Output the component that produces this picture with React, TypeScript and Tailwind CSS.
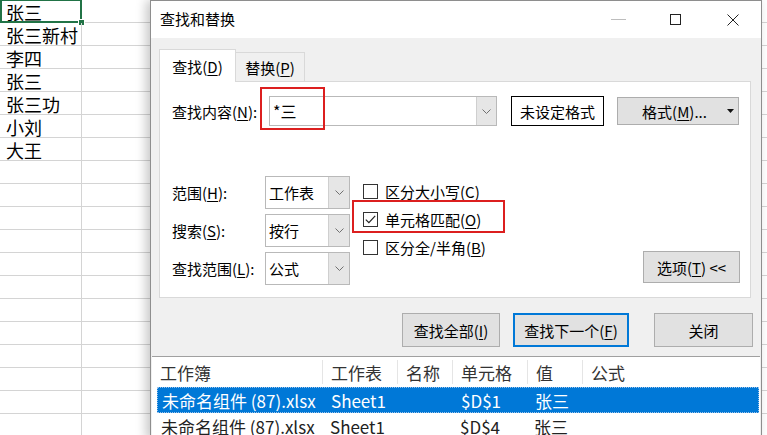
import React from "react";

const cjk = { fontFamily: '"Noto Sans CJK SC", "Liberation Sans", sans-serif' };

const sheetRows = ["张三", "张三新村", "李四", "张三", "张三功", "小刘", "大王"];

function U({ c }: { c: string }) {
  return <span className="underline underline-offset-2 decoration-1">{c}</span>;
}

function Chevron() {
  return (
    <svg width="9" height="5" viewBox="0 0 9 5" fill="none">
      <path d="M0.5 0.5 L4.5 4.5 L8.5 0.5" stroke="#707070" strokeWidth="1" />
    </svg>
  );
}

function Select({ value, h }: { value: string; h: string }) {
  return (
    <div className={`flex w-[85px] ${h} border border-[#b9b9b9] bg-white`}>
      <div className="flex flex-1 items-center pl-[3px] text-[15px] leading-none">{value}</div>
      <div className="flex w-[21px] items-center justify-center border-l border-[#cfcfcf] bg-[#e6e6e6]">
        <Chevron />
      </div>
    </div>
  );
}

function Check({ checked, children }: { checked?: boolean; children: React.ReactNode }) {
  return (
    <div className="flex h-[28px] items-center">
      <div className="flex h-[15px] w-[15px] items-center justify-center border border-[#333] bg-white">
        {checked && (
          <svg width="11" height="9" viewBox="0 0 11 9" fill="none">
            <path d="M0.8 4.6 L3.9 7.7 L10.2 0.9" stroke="#222" strokeWidth="1.2" />
          </svg>
        )}
      </div>
      <span className="ml-[7px] text-[15px] leading-none">{children}</span>
    </div>
  );
}

const cols = [
  { w: "w-[170px]", label: "工作簿" },
  { w: "w-[75px]", label: "工作表" },
  { w: "w-[55px]", label: "名称" },
  { w: "w-[75px]", label: "单元格" },
  { w: "w-[55px]", label: "值" },
  { w: "flex-1", label: "公式" },
];

const results = [
  { book: "未命名组件 (87).xlsx", sheet: "Sheet1", cell: "$D$1", value: "张三", selected: true },
  { book: "未命名组件 (87).xlsx", sheet: "Sheet1", cell: "$D$4", value: "张三", selected: false },
];

export default function App() {
  return (
    <div className="relative h-[435px] w-[767px] overflow-hidden bg-white text-black" style={cjk}>
      {/* worksheet behind the dialog */}
      <div className="flex flex-col">
        {Array.from({ length: 19 }).map((_, i) => (
          <div key={i} className="flex h-[23px] border-b border-[#d4d4d4]">
            <div className="relative flex w-[82px] items-end border-r border-[#d4d4d4] pb-[1px] pl-[6px] text-[18px] leading-none">
              {sheetRows[i] ?? ""}
              {i === 0 && (
                <>
                  <div className="absolute -top-px left-0 h-[24px] w-[82px] border-2 border-[#217346]" />
                  <div className="absolute -right-[3px] top-[20px] h-[5px] w-[5px] bg-[#217346] outline outline-1 outline-white" />
                </>
              )}
            </div>
            <div className="flex-1" />
          </div>
        ))}
      </div>

      {/* find & replace dialog */}
      <div className="absolute left-[150px] top-0 flex h-[440px] w-[612px] flex-col border border-[#8e8e8e] bg-[#f0f0f0] shadow-[-4px_0_10px_rgba(0,0,0,0.22)]">
        <div className="flex h-[40px] items-center bg-white">
          <span className="pl-[9px] text-[15px]">查找和替换</span>
          <div className="ml-auto flex h-full">
            <div className="flex w-[57px] items-center justify-center">
              <div className="h-px w-[15px] bg-[#bdbdbd]" />
            </div>
            <div className="flex w-[57px] items-center justify-center">
              <div className="h-[11px] w-[11px] border border-[#222]" />
            </div>
            <div className="flex w-[57px] items-center justify-center">
              <svg width="12" height="12" viewBox="0 0 12 12">
                <path d="M0.5 0.5 L11.5 11.5 M11.5 0.5 L0.5 11.5" stroke="#222" strokeWidth="1" />
              </svg>
            </div>
          </div>
        </div>

        <div className="flex flex-col px-[8px] pt-[10px]">
          <div className="flex h-[33px] items-end">
            <div className="relative z-10 -mb-px flex h-[33px] w-[77px] items-center justify-center border border-b-0 border-[#d9d9d9] bg-white text-[15px] leading-none">
              查找(<U c="D" />)
            </div>
            <div className="flex h-[29px] w-[69px] items-center justify-center border border-b-0 border-l-0 border-[#d9d9d9] text-[15px] leading-none">
              替换(<U c="P" />)
            </div>
          </div>

          <div className="flex h-[217px] w-[592px] flex-col border border-[#d9d9d9] bg-white pl-[12px] pr-[10px] pt-[14px]">
            <div className="flex h-[30px] items-center">
              <div className="w-[97px] text-[15px] leading-none">
                查找内容(<U c="N" />):
              </div>
              <div className="relative flex h-[30px] w-[228px] border border-[#b9b9b9]">
                <div className="flex flex-1 items-center pl-[3px] text-[16px] leading-none">*三</div>
                <div className="flex w-[20px] items-center justify-center border-l border-[#cfcfcf] bg-[#e6e6e6]">
                  <Chevron />
                </div>
                <div className="absolute -left-[10px] -top-[10px] h-[43px] w-[65px] border-2 border-[#dc1f1f]" />
              </div>
              <div className="ml-[14px] flex h-[30px] w-[93px] items-center justify-center border border-black text-[15px] leading-none">
                未设定格式
              </div>
              <div className="ml-[13px] flex h-[28px] w-[122px] items-center border border-[#adadad] bg-[#e1e1e1] text-[15px] leading-none">
                <span className="flex-1 pl-[4px] text-center">
                  格式(<U c="M" />)...
                </span>
                <svg className="mr-[4px]" width="7" height="4" viewBox="0 0 7 4">
                  <path d="M0 0 H7 L3.5 4 Z" fill="#111" />
                </svg>
              </div>
            </div>

            <div className="mt-[50px] flex">
              <div className="flex flex-col gap-[5px]">
                {[
                  { l: "范围(", k: "H", v: "工作表" },
                  { l: "搜索(", k: "S", v: "按行" },
                  { l: "查找范围(", k: "L", v: "公式" },
                ].map((r) => (
                  <div key={r.k} className="flex items-center">
                    <div className="w-[93px] text-[15px] leading-none">
                      {r.l}
                      <U c={r.k} />
                      ):
                    </div>
                    <Select value={r.v} h="h-[33px]" />
                  </div>
                ))}
              </div>

              <div className="relative ml-[13px] flex flex-col pt-px">
                <Check>
                  区分大小写(<U c="C" />)
                </Check>
                <Check checked>
                  单元格匹配(<U c="O" />)
                </Check>
                <Check>
                  区分全/半角(<U c="B" />)
                </Check>
                <div className="absolute -left-[11px] top-[24px] h-[33px] w-[153px] border-2 border-[#dc1f1f]" />
              </div>

              <div className="flex flex-1 items-start justify-end pt-[75px]">
                <div className="flex h-[32px] w-[97px] items-center justify-center border border-[#adadad] bg-[#e1e1e1] text-[15px] leading-none">
                  选项(<U c="T" />)&nbsp;&lt;&lt;
                </div>
              </div>
            </div>
          </div>
        </div>

        <div className="flex justify-end gap-[13px] pr-[8px] pt-[15px]">
          <div className="flex h-[34px] w-[98px] items-center justify-center border border-[#adadad] bg-[#e1e1e1] text-[15px] leading-none">
            查找全部(<U c="I" />)
          </div>
          <div className="mr-[12px] flex h-[34px] w-[116px] items-center justify-center border-2 border-[#0078d7] bg-[#e1e1e1] text-[15px] leading-none">
            查找下一个(<U c="F" />)
          </div>
          <div className="flex h-[34px] w-[99px] items-center justify-center border border-[#adadad] bg-[#e1e1e1] text-[15px] leading-none">
            关闭
          </div>
        </div>

        <div className="mx-px mt-[9px] flex flex-1 flex-col border-t border-[#a0a0a0] bg-white text-[17px] leading-none">
          <div className="flex h-[30px] text-[#333]">
            {cols.map((c, i) => (
              <div
                key={c.label}
                className={`${c.w} flex items-center pl-[8px] ${i > 0 ? "my-[3px] border-l border-[#e5e5e5]" : ""}`}
              >
                {c.label}
              </div>
            ))}
          </div>
          {results.map((r, i) => (
            <div
              key={i}
              className={`ml-[5px] mr-[1px] flex h-[26px] items-center ${
                r.selected ? "border border-dotted border-[#9cc3ea] bg-[#0078d7] text-white" : "text-[#222]"
              }`}
            >
              <div className="w-[165px] pl-[4px]">{r.book}</div>
              <div className="w-[75px] pl-[8px]">{r.sheet}</div>
              <div className="w-[55px]" />
              <div className="w-[75px] pl-[8px]">{r.cell}</div>
              <div className="w-[55px] pl-[7px]">{r.value}</div>
              <div className="flex-1" />
            </div>
          ))}
        </div>
      </div>
    </div>
  );
}
